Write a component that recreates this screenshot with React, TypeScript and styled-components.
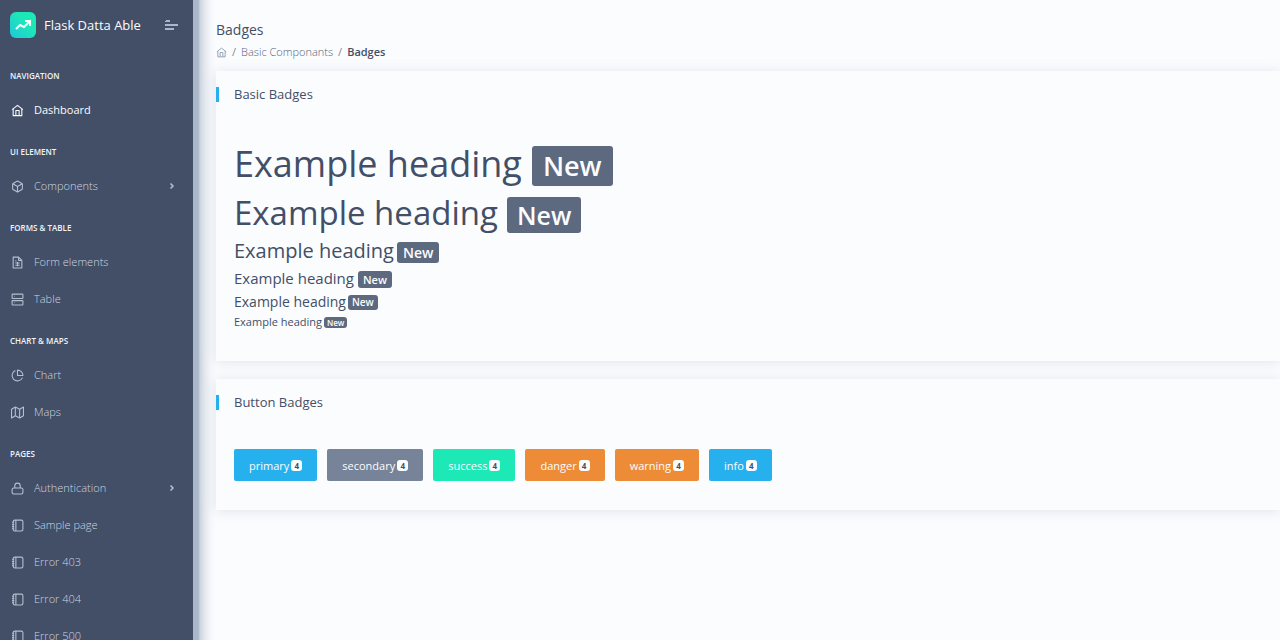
import React from "react";
import styled, { createGlobalStyle } from "styled-components";

const GlobalStyle = createGlobalStyle`
  *, *::before, *::after { box-sizing: border-box; }
  html, body, #root { height: 100%; }
  body {
    margin: 0;
    overflow: hidden;
    background: #fbfcfe;
    color: #424f67;
    font-family: "Open Sans", "Noto Sans", sans-serif;
    font-size: 11px;
  }
  h1, h2, h3, h4, h5, h6, ul, ol { margin: 0; padding: 0; font-weight: 400; }
  ul, ol { list-style: none; }
  a { color: inherit; text-decoration: none; }
  svg { display: block; }
`;

const Page = styled.div`
  display: flex;
  height: 100vh;
  overflow: hidden;
`;

const Sidebar = styled.nav`
  position: relative;
  z-index: 1;
  flex: 0 0 193px;
  overflow: hidden;
  height: 100%;
  background: #424f67;
  color: #a9b7c9;
`;

const SidebarEdge = styled.div`
  flex: 0 0 23px;
  background: linear-gradient(90deg, #a9b7c9 0 5px, #cbd4df 7px, #e4e9ef 12px, #f5f7fa 18px, #fbfcfe 23px);
`;

const Brand = styled.div`
  display: flex;
  align-items: center;
  height: 52px;
  padding: 0 15px 2px 10px;
`;

const BrandLink = styled.a`
  display: flex;
  flex: 1;
  align-items: center;
  gap: 8px;
  color: #fbfcfe;
  font-size: 13px;
  line-height: 18px;
  white-space: nowrap;
`;

const LogoTile = styled.span`
  display: grid;
  place-items: center;
  width: 26px;
  height: 26px;
  border-radius: 6px;
  background: linear-gradient(225deg, #1de9b6 35%, #1fc8db 100%);
`;

const MenuButton = styled.button`
  padding: 0;
  border: 0;
  background: none;
  color: #a9b7c9;
`;

const Caption = styled.h6`
  height: 40px;
  padding: 0 10px;
  color: #f0f3f7;
  font-size: 8px;
  font-weight: 600;
  line-height: 48px;
  text-transform: uppercase;
`;

const NavList = styled.ul`
  display: flex;
  flex-direction: column;
  gap: 1px;
`;

const NavLink = styled.a<{ $active?: boolean }>`
  display: flex;
  align-items: center;
  gap: 10px;
  height: 36px;
  padding: 0 15px 0 11px;
  color: ${(p) => (p.$active ? "#fbfcfe" : "#b4c0d0")};
  font-weight: ${(p) => (p.$active ? 400 : 300)};
  line-height: 16px;
`;

const NavText = styled.span<{ $active?: boolean }>`
  flex: 1;
  color: ${(p) => (p.$active ? "#fbfcfe" : "#ccd5e1")};
`;

const Main = styled.main`
  flex: 1;
  min-width: 0;
`;

const PageHeader = styled.header`
  display: flex;
  flex-direction: column;
  gap: 2px;
  height: 71px;
  padding-top: 20px;
`;

const PageTitle = styled.h5`
  font-size: 14px;
  line-height: 20px;
`;

const Crumbs = styled.ol`
  display: flex;
  align-items: center;
  gap: 5px;
  line-height: 20px;
`;

const Crumb = styled.li<{ $current?: boolean }>`
  display: flex;
  align-items: center;
  gap: 5px;
  color: ${(p) => (p.$current ? "#424f67" : "#56637a")};
  font-weight: ${(p) => (p.$current ? 600 : 300)};

  &:not(:first-child)::before {
    content: "/";
    color: #7c899d;
    font-weight: 400;
  }
`;

const HomeLink = styled.a`
  color: #8f9db1;
`;

const Card = styled.section`
  margin-bottom: 18px;
  background: #fbfcfe;
  box-shadow: 0 1px 12px rgba(120, 140, 165, 0.22);
`;

const CardHeader = styled.header`
  display: flex;
  align-items: center;
  height: 47px;
`;

const CardTitle = styled.h5`
  padding-left: 15px;
  border-left: 3px solid #27b0ee;
  font-size: 13px;
  line-height: 15px;
`;

const HeadingBody = styled.div`
  padding: 21px 18px 30px;
`;

const sizes = {
  h1: { font: 36, line: 50, badge: 27, height: 40, pad: 11, gap: 10, drop: 4 },
  h2: { font: 33, line: 47, badge: 25, height: 36, pad: 10, gap: 9, drop: 4 },
  h3: { font: 20, line: 30, badge: 14, height: 21, pad: 6, gap: 3, drop: 2 },
  h4: { font: 15, line: 25, badge: 11, height: 17, pad: 5, gap: 4, drop: 2 },
  h5: { font: 14, line: 21, badge: 10, height: 15, pad: 4, gap: 2, drop: 2 },
  h6: { font: 11, line: 19, badge: 8, height: 11, pad: 3, gap: 2, drop: 2 },
};
type Level = keyof typeof sizes;

const Example = styled.h1<{ $level: Level }>`
  display: flex;
  align-items: center;
  gap: ${(p) => sizes[p.$level].gap}px;
  height: ${(p) => sizes[p.$level].line}px;
  font-size: ${(p) => sizes[p.$level].font}px;
  line-height: 1;
`;

const Badge = styled.span<{ $level: Level }>`
  margin-top: ${(p) => sizes[p.$level].drop}px;
  padding: 0 ${(p) => sizes[p.$level].pad}px;
  border-radius: 3px;
  background: #5c697f;
  color: #fbfcfe;
  font-size: ${(p) => sizes[p.$level].badge}px;
  font-weight: 600;
  line-height: ${(p) => sizes[p.$level].height}px;
`;

const ButtonRow = styled.div`
  display: flex;
  flex-wrap: wrap;
  gap: 10px;
  padding: 23px 18px 29px;
`;

const Button = styled.button<{ $color: string }>`
  display: flex;
  align-items: center;
  gap: 2px;
  height: 32px;
  padding: 0 15px;
  border: 0;
  border-radius: 2px;
  background: ${(p) => p.$color};
  color: #fbfcfe;
  font: 400 11px "Open Sans", "Noto Sans", sans-serif;
`;

const Count = styled.span`
  width: 11px;
  border-radius: 3px;
  background: #fbfcfe;
  color: #424f67;
  font-size: 8px;
  font-weight: 700;
  line-height: 11px;
  text-align: center;
`;

const paths = {
  home: <><path d="M2 10.5 12 2.5l10 8" /><path d="M4 9v12.5h16V9" /><path d="M9 21v-9h6v9" /></>,
  box: <><path d="M21 16V8a2 2 0 0 0-1-1.7l-7-4a2 2 0 0 0-2 0l-7 4A2 2 0 0 0 3 8v8a2 2 0 0 0 1 1.7l7 4a2 2 0 0 0 2 0l7-4a2 2 0 0 0 1-1.7z" /><path d="M3.3 7 12 12l8.7-5M12 22V12" /></>,
  file: <><path d="M14 2H4v20h16V8z" /><path d="M14 2v6h6M16 13H8M16 17H8M10 9H8M12 11v8" /></>,
  server: <><rect x="2" y="2" width="20" height="8" rx="1" /><rect x="2" y="14" width="20" height="8" rx="1" /><path d="M6 6h1M6 18h1" /></>,
  chart: <><path d="M21.2 15.9A10 10 0 1 1 8 2.8" /><path d="M22 12A10 10 0 0 0 12 2v10z" /></>,
  map: <><path d="M1 6v16l7-4 8 4 7-4V2l-7 4-8-4z" /><path d="M8 2v16M16 6v16" /></>,
  lock: <><rect x="2" y="11" width="20" height="11" rx="3" /><path d="M7 11V7a5 5 0 0 1 10 0v4" /></>,
  page: <><rect x="4" y="2" width="18" height="20" rx="3" /><path d="M9 2v20M2 6h4M2 10h4M2 14h4M2 18h4" /></>,
};
type IconName = keyof typeof paths;

const Icon = ({ name, size = 13 }: { name: IconName; size?: number }) => (
  <svg width={size} height={size} viewBox="0 0 24 24" fill="none" stroke="currentColor" strokeWidth="2" strokeLinejoin="round" aria-hidden="true">
    {paths[name]}
  </svg>
);

const Chevron = () => (
  <svg width="12" height="12" viewBox="0 0 24 24" fill="none" stroke="currentColor" strokeWidth="3" aria-hidden="true">
    <path d="m9 7 5 5-5 5" />
  </svg>
);

type Item = { label: string; icon: IconName; active?: boolean; sub?: boolean };
const sections: { title: string; items: Item[] }[] = [
  { title: "Navigation", items: [{ label: "Dashboard", icon: "home", active: true }] },
  { title: "UI Element", items: [{ label: "Components", icon: "box", sub: true }] },
  { title: "Forms & Table", items: [{ label: "Form elements", icon: "file" }, { label: "Table", icon: "server" }] },
  { title: "Chart & Maps", items: [{ label: "Chart", icon: "chart" }, { label: "Maps", icon: "map" }] },
  {
    title: "Pages",
    items: [
      { label: "Authentication", icon: "lock", sub: true },
      { label: "Sample page", icon: "page" },
      { label: "Error 403", icon: "page" },
      { label: "Error 404", icon: "page" },
      { label: "Error 500", icon: "page" },
    ],
  },
];

const levels: Level[] = ["h1", "h2", "h3", "h4", "h5", "h6"];

const buttons = [
  { label: "primary", color: "#27b0ee" },
  { label: "secondary", color: "#768398" },
  { label: "success", color: "#1de9b6" },
  { label: "danger", color: "#ee8b37" },
  { label: "warning", color: "#ee8b37" },
  { label: "info", color: "#27b0ee" },
];

export default function App() {
  return (
    <Page>
      <GlobalStyle />
      <Sidebar>
        <Brand>
          <BrandLink href="#">
            <LogoTile>
              <svg width="16" height="10" viewBox="0 0 16 10" fill="none" stroke="#fbfcfe" strokeWidth="2" aria-hidden="true">
                <path d="M1 9l4-4 4 2 5-5" />
                <path d="M10 1h5v5" />
              </svg>
            </LogoTile>
            Flask Datta Able
          </BrandLink>
          <MenuButton aria-label="Toggle menu">
            <svg width="13" height="10" viewBox="0 0 13 10" fill="currentColor" aria-hidden="true">
              <path d="M0 1h1V0h4v2H0zM0 4h13v2H0zM0 8h9v2H0z" />
            </svg>
          </MenuButton>
        </Brand>
        {sections.map((section) => (
          <React.Fragment key={section.title}>
            <Caption>{section.title}</Caption>
            <NavList>
              {section.items.map((item) => (
                <li key={item.label}>
                  <NavLink href="#" $active={item.active}>
                    <Icon name={item.icon} />
                    <NavText $active={item.active}>{item.label}</NavText>
                    {item.sub && <Chevron />}
                  </NavLink>
                </li>
              ))}
            </NavList>
          </React.Fragment>
        ))}
      </Sidebar>
      <SidebarEdge />
      <Main>
        <PageHeader>
          <PageTitle>Badges</PageTitle>
          <Crumbs>
            <Crumb><HomeLink href="#" aria-label="Home"><Icon name="home" size={11} /></HomeLink></Crumb>
            <Crumb><a href="#">Basic Componants</a></Crumb>
            <Crumb $current>Badges</Crumb>
          </Crumbs>
        </PageHeader>
        <Card>
          <CardHeader><CardTitle>Basic Badges</CardTitle></CardHeader>
          <HeadingBody>
            {levels.map((level) => (
              <Example as={level} key={level} $level={level}>
                Example heading
                <Badge $level={level}>New</Badge>
              </Example>
            ))}
          </HeadingBody>
        </Card>
        <Card>
          <CardHeader><CardTitle>Button Badges</CardTitle></CardHeader>
          <ButtonRow>
            {buttons.map((b) => (
              <Button key={b.label} $color={b.color}>
                {b.label}
                <Count>4</Count>
              </Button>
            ))}
          </ButtonRow>
        </Card>
      </Main>
    </Page>
  );
}
